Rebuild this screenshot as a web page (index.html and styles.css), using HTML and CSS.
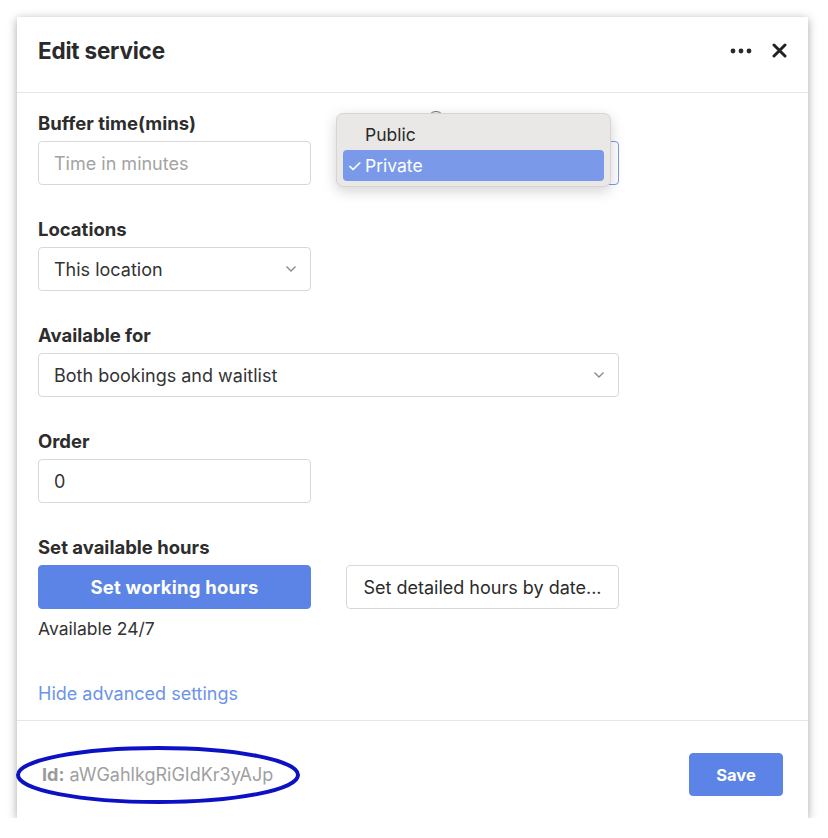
FILE: index.html
```html
<!DOCTYPE html>
<html lang="en">
<head>
<meta charset="utf-8">
<title>Edit service</title>
<link rel="stylesheet" href="styles.css">
</head>
<body>
<div class="dialog">
  <header class="dlg-header">
    <h1 class="dlg-title">Edit service</h1>
    <div class="dlg-actions">
      <button class="icon-btn" aria-label="More">
        <svg width="22" height="6" viewBox="0 0 22 6"><circle cx="3" cy="3" r="2.4" fill="#2a2a2a"/><circle cx="11" cy="3" r="2.4" fill="#2a2a2a"/><circle cx="19" cy="3" r="2.4" fill="#2a2a2a"/></svg>
      </button>
      <button class="icon-btn" aria-label="Close">
        <svg width="15" height="15" viewBox="0 0 15 15"><path d="M2 2 L13 13 M13 2 L2 13" stroke="#222" stroke-width="3" stroke-linecap="round"/></svg>
      </button>
    </div>
  </header>

  <main class="dlg-body">
    <div class="row">
      <div class="field">
        <label class="label">Buffer time(mins)</label>
        <div class="control placeholder">Time in minutes</div>
      </div>
      <div class="field vis-field">
        <label class="label">Visibility <span class="help">?</span></label>
        <div class="control focused">Private</div>
        <div class="popup">
          <div class="opt">Public</div>
          <div class="opt selected"><span class="check">✓</span>Private</div>
        </div>
      </div>
    </div>

    <div class="row">
      <div class="field">
        <label class="label">Locations</label>
        <div class="control select">This location<svg class="chev" width="12" height="8" viewBox="0 0 12 8"><path d="M1.5 1.5 L6 6 L10.5 1.5" fill="none" stroke="#8a8a8a" stroke-width="1.4"/></svg></div>
      </div>
    </div>

    <div class="row">
      <div class="field wide">
        <label class="label">Available for</label>
        <div class="control select">Both bookings and waitlist<svg class="chev" width="12" height="8" viewBox="0 0 12 8"><path d="M1.5 1.5 L6 6 L10.5 1.5" fill="none" stroke="#8a8a8a" stroke-width="1.4"/></svg></div>
      </div>
    </div>

    <div class="row">
      <div class="field">
        <label class="label">Order</label>
        <div class="control">0</div>
      </div>
    </div>

    <div class="hours">
      <div class="label">Set available hours</div>
      <div class="btn-row">
        <button class="btn primary">Set working hours</button>
        <button class="btn secondary">Set detailed hours by date...</button>
      </div>
      <div class="note">Available 24/7</div>
    </div>

    <a class="link" href="#">Hide advanced settings</a>
  </main>

  <footer class="dlg-footer">
    <div class="id-wrap">
      <span class="id"><b>Id:</b> aWGahlkgRiGIdKr3yAJp</span>
      <svg class="ring" width="290" height="62" viewBox="0 0 290 62"><ellipse cx="145" cy="31" rx="140" ry="27" fill="none" stroke="#0c12c4" stroke-width="4"/></svg>
    </div>
    <button class="btn save">Save</button>
  </footer>
</div>
</body>
</html>
```

FILE: styles.css
```css
* { box-sizing: border-box; }

html, body {
  margin: 0;
  padding: 0;
  background: #ffffff;
  font-family: Inter, "Noto Sans", sans-serif;
  color: #2b2b2b;
}

.dialog {
  margin: 17px 0 0 17px;
  width: 791px;
  height: 801px;
  background: #fff;
  box-shadow: 0 2px 9px rgba(0, 0, 0, 0.35);
  display: flex;
  flex-direction: column;
}

.dlg-header {
  height: 76px;
  border-bottom: 1px solid #e6e6e6;
  display: flex;
  align-items: center;
  justify-content: space-between;
  padding: 0 21px 8px 21px;
}

.dlg-title {
  margin: 0;
  font-size: 22.5px;
  font-weight: 700;
  letter-spacing: -0.2px;
  color: #2a2a2a;
}

.dlg-actions {
  display: flex;
  align-items: center;
  gap: 20px;
}

.icon-btn {
  border: 0;
  background: none;
  padding: 0;
  display: flex;
  align-items: center;
}

.dlg-body {
  flex: 1;
  padding: 19px 21px 0 21px;
  display: flex;
  flex-direction: column;
  border-bottom: 1px solid #e6e6e6;
}

.row {
  display: flex;
  gap: 35px;
  margin-bottom: 33px;
}

.field {
  width: 273px;
  display: flex;
  flex-direction: column;
  gap: 7px;
}

.field.wide { width: 581px; }

.label {
  font-size: 18.5px;
  font-weight: 700;
  line-height: 22px;
  color: #2d2d2d;
  display: flex;
  align-items: center;
  gap: 2px;
}

.help {
  width: 18px;
  height: 18px;
  margin-top: -6px;
  border: 1.5px solid #6e6e6e;
  border-radius: 50%;
  font-size: 11px;
  display: inline-flex;
  align-items: center;
  justify-content: center;
  color: #6e6e6e;
}

.control {
  height: 44px;
  border: 1px solid #d8d8d8;
  border-radius: 4px;
  padding: 0 15px;
  display: flex;
  align-items: center;
  justify-content: space-between;
  font-size: 18px;
  color: #333;
}

.control.placeholder { color: #a3a3a3; }
.control.focused { border-color: #7b9ae8; }

.chev { margin-right: -2px; }

.vis-field { position: relative; }

.popup {
  position: absolute;
  left: -10px;
  top: 1px;
  width: 275px;
  height: 74px;
  background: #e9e8e6;
  border: 1px solid #d6d5d3;
  border-radius: 7px;
  box-shadow: 0 4px 14px rgba(0, 0, 0, 0.18);
  padding: 5px 6px;
  display: flex;
  flex-direction: column;
}

.opt {
  height: 31px;
  display: flex;
  align-items: center;
  padding-left: 22px;
  font-size: 17.5px;
  color: #2a2a2a;
  border-radius: 4px;
}

.opt:first-child { height: 32px; }

.opt.selected {
  background: #7a9ae9;
  color: #fff;
  padding-left: 4px;
}

.check {
  font-size: 17px;
  width: 18px;
}

.hours {
  display: flex;
  flex-direction: column;
}

.btn-row {
  display: flex;
  gap: 35px;
  margin-top: 7px;
}

.btn {
  font-family: inherit;
  height: 44px;
  border-radius: 4px;
  font-size: 18px;
  cursor: pointer;
}

.btn.primary {
  width: 273px;
  background: #5b84e6;
  border: 1px solid #5b84e6;
  color: #fff;
  font-weight: 700;
  font-size: 18.5px;
  letter-spacing: 0.2px;
}

.btn.secondary {
  width: 273px;
  background: #fff;
  border: 1px solid #d8d8d8;
  color: #2b2b2b;
}

.note {
  margin-top: 9px;
  font-size: 17.5px;
  line-height: 22px;
  color: #333;
}

.link {
  margin-top: 43px;
  font-size: 18px;
  line-height: 22px;
  color: #6c94e8;
  text-decoration: none;
  align-self: flex-start;
}

.dlg-footer {
  height: 97px;
  display: flex;
  align-items: center;
  justify-content: space-between;
  padding: 10px 25px 0 25px;
}

.id-wrap {
  position: relative;
  display: flex;
  align-items: center;
}

.id {
  font-size: 18px;
  color: #a0a0a0;
}

.id b { color: #9a9a9a; }

.ring {
  position: absolute;
  left: -29px;
  top: 50%;
  margin-top: -31px;
}

.btn.save {
  width: 94px;
  height: 43px;
  background: #5b84e6;
  border: 1px solid #5b84e6;
  color: #fff;
  font-weight: 700;
  font-size: 16.5px;
}
```
